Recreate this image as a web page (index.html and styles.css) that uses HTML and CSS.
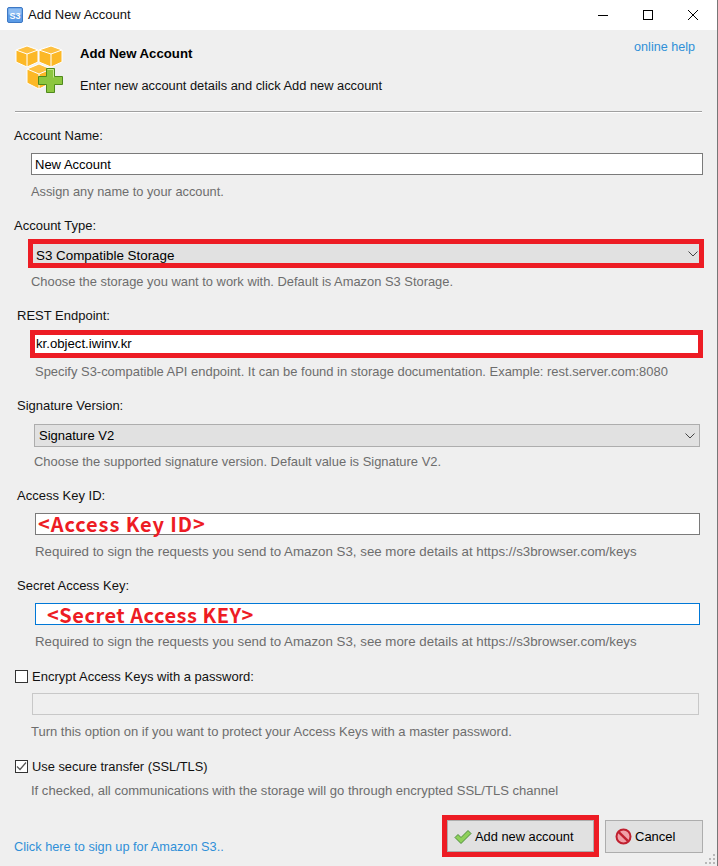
FILE: index.html
```html
<!DOCTYPE html>
<html lang="en">
<head>
	<meta charset="UTF-8">
	<title>Add New Account</title>
	<link rel="stylesheet" href="styles.css">
</head>
<body>
	<div class="window">
		<div class="titlebar">
			<svg class="app-icon" width="16" height="16" viewBox="0 0 16 16">
				<rect x="0.5" y="0.5" width="15" height="15" rx="1.5" fill="#5b9be6" stroke="#3d78c4"/>
				<rect x="1.5" y="1.5" width="13" height="6" fill="#8fbdf2"/>
				<text x="8" y="11.5" text-anchor="middle" class="app-icon-text">S3</text>
			</svg>
			<span class="title">Add New Account</span>
			<div class="win-buttons">
				<svg width="12" height="12" viewBox="0 0 12 12"><path d="M1 6.5h10" stroke="#000" fill="none"/></svg>
				<svg width="12" height="12" viewBox="0 0 12 12"><rect x="1.5" y="1.5" width="9" height="9" stroke="#000" fill="none"/></svg>
				<svg width="12" height="12" viewBox="0 0 12 12"><path d="M1 1l10 10M11 1L1 11" stroke="#000" fill="none"/></svg>
			</div>
		</div>

		<div class="content">
			<div class="header">
				<svg class="logo" width="48" height="48" viewBox="0 0 48 48">
					<g stroke="#fff" stroke-width="1" stroke-linejoin="round">
						<path d="M1 5l11-4 11 4v12l-11 5-11-5z" fill="#fcb826"/>
						<path d="M1 5l11 4 11-4-11-4z" fill="#fdc040"/>
						<path d="M12 9v13" fill="none"/>
						<path d="M24 5l12-4 11 4v12l-11 5-12-5z" fill="#fcb826"/>
						<path d="M24 5l12 4 11-4-11-4z" fill="#fdc040"/>
						<path d="M36 9v13" fill="none"/>
						<path d="M12 24l12-5 12 5v14l-12 6-12-6z" fill="#fcb826"/>
						<path d="M12 24l12 5 12-5-12-5z" fill="#fdc040"/>
						<path d="M24 29v15" fill="none"/>
					</g>
					<path d="M32 24h8v8h8v8h-8v8h-8v-8h-8v-8h8z" transform="translate(-0.5 -0.5)" fill="#8cc63f" stroke="#4f8a1c"/>
					<path d="M33 25h6v8" transform="translate(-0.5 -0.5)" stroke="#c5e58d" fill="none"/>
				</svg>
				<div class="header-text">
					<h1>Add New Account</h1>
					<p>Enter new account details and click Add new account</p>
				</div>
				<a class="link help">online help</a>
			</div>
			<div class="divider"></div>

			<div class="field name">
				<label>Account Name:</label>
				<div class="input">New Account</div>
				<div class="hint">Assign any name to your account.</div>
			</div>

			<div class="field type">
				<label>Account Type:</label>
				<div class="select marked">S3 Compatible Storage
					<svg class="chevron" width="10" height="6" viewBox="0 0 10 6"><path d="M0.5 0.5L5 5l4.5-4.5" stroke="#444" fill="none"/></svg>
				</div>
				<div class="hint">Choose the storage you want to work with. Default is Amazon S3 Storage.</div>
			</div>

			<div class="field endpoint">
				<label>REST Endpoint:</label>
				<div class="input marked">kr.object.iwinv.kr</div>
				<div class="hint">Specify S3-compatible API endpoint. It can be found in storage documentation. Example: rest.server.com:8080</div>
			</div>

			<div class="field signature">
				<label>Signature Version:</label>
				<div class="select">Signature V2
					<svg class="chevron" width="10" height="6" viewBox="0 0 10 6"><path d="M0.5 0.5L5 5l4.5-4.5" stroke="#444" fill="none"/></svg>
				</div>
				<div class="hint">Choose the supported signature version. Default value is Signature V2.</div>
			</div>

			<div class="field access">
				<label>Access Key ID:</label>
				<div class="input scribble">&lt;Access Key ID&gt;</div>
				<div class="hint">Required to sign the requests you send to Amazon S3, see more details at https://s3browser.com/keys</div>
			</div>

			<div class="field secret">
				<label>Secret Access Key:</label>
				<div class="input scribble focused">&lt;Secret Access KEY&gt;</div>
				<div class="hint">Required to sign the requests you send to Amazon S3, see more details at https://s3browser.com/keys</div>
			</div>

			<div class="field encrypt">
				<div class="check"><span class="box"></span>Encrypt Access Keys with a password:</div>
				<div class="input disabled"></div>
				<div class="hint">Turn this option on if you want to protect your Access Keys with a master password.</div>
			</div>

			<div class="field secure">
				<div class="check">
					<span class="box">
						<svg width="11" height="11" viewBox="0 0 11 11"><path d="M1 5.5l3 3 6-7" stroke="#555" stroke-width="1.2" fill="none"/></svg>
					</span>Use secure transfer (SSL/TLS)</div>
				<div class="hint">If checked, all communications with the storage will go through encrypted SSL/TLS channel</div>
			</div>

			<div class="footer">
				<a class="link signup">Click here to sign up for Amazon S3..</a>
				<div class="button-mark">
					<button class="btn add">
						<svg width="18" height="16" viewBox="0 0 18 16"><path d="M1 8.5l3-3 3 3 7-7 3 3-10 10z" fill="#8ed05a" stroke="#4d8f3a"/></svg>
						Add new account
					</button>
				</div>
				<button class="btn cancel">
					<svg width="17" height="17" viewBox="0 0 17 17"><circle cx="8.5" cy="8.5" r="7" fill="#f0a0a8" stroke="#c0202f" stroke-width="2"/><path d="M3.8 4.2l9 8.6" stroke="#c0202f" stroke-width="2.4"/></svg>
					Cancel
				</button>
			</div>
		</div>
		<svg class="grip" width="12" height="12" viewBox="0 0 12 12" fill="#b8b8b8">
			<rect x="9" y="1" width="2" height="2"/><rect x="5" y="5" width="2" height="2"/><rect x="9" y="5" width="2" height="2"/>
			<rect x="1" y="9" width="2" height="2"/><rect x="5" y="9" width="2" height="2"/><rect x="9" y="9" width="2" height="2"/>
		</svg>
	</div>
</body>
</html>
```

FILE: styles.css
```css
html {
	box-sizing: border-box;
}
*, *:before, *:after {
	box-sizing: inherit;
}
body {
	margin: 0;
	font-family: "Liberation Sans", Arial, sans-serif;
	font-size: 13px;
	line-height: 18px;
	color: #111;
}
.window {
	position: relative;
	width: 718px;
	height: 866px;
	overflow: hidden;
	background: #efefef;
	border-right: 1px solid #777;
}

.titlebar {
	display: flex;
	align-items: center;
	height: 30px;
	padding-left: 7px;
	background: #fff;
}
.app-icon-text {
	font-family: "Liberation Sans", sans-serif;
	font-size: 9px;
	font-weight: bold;
	fill: #fff;
}
.title {
	margin-left: 5px;
}
.win-buttons {
	display: flex;
	gap: 33px;
	margin-left: auto;
	margin-right: 18px;
}

.content {
	padding: 0 14px 0 14px;
}
.header {
	display: flex;
	height: 81px;
	padding: 15px 0 0 1px;
}
.header-text {
	margin-left: 17px;
}
.header h1 {
	margin: 0;
	font-size: 13.2px;
	line-height: 18px;
	font-weight: 700;
	color: #000;
}
.header p {
	margin: 14px 0 0;
	font-size: 12.85px;
}
.link {
	color: #2f8fd8;
}
.help {
	margin-left: auto;
	margin-right: 8px;
	margin-top: -7px;
	font-size: 12.6px;
}
.divider {
	width: 687px;
	margin-left: 1px;
	border-top: 1px solid #a0a0a0;
	border-bottom: 1px solid #fff;
	height: 2px;
}

.field {
	margin-top: 15px;
}
.name {
	margin-top: 13px;
}
.field label {
	display: block;
	padding-top: 1px;
}
.input, .select {
	position: relative;
	background: #fff;
	border: 1px solid #7a7a7a;
	height: 22px;
	line-height: 21px;
	padding-left: 3px;
	color: #000;
}
.select {
	background: #e1e1e1;
	border-color: #adadad;
}
.chevron {
	position: absolute;
	right: 4px;
	top: 8px;
}
.marked {
	border: 5px solid #ed1c24;
	line-height: 18px;
	padding-left: 1px;
}
.hint {
	padding-top: 1px;
	color: #6d6d6d;
}

/* each row sits on its own indent, like the original dialog */
.name .input { margin: 8px 0 0 17px; }
.name .hint { margin: 7px 0 0 17px; font-size: 12.8px; }

.type .select { margin: 4px -1px 0 14px; height: 29px; line-height: 23px; padding-left: 3px; font-size: 13.4px; }
.type .chevron { top: 7px; right: 1px; }
.type .hint { margin: 4px 0 0 17px; font-size: 12.9px; }

.endpoint label { margin-left: 3px; }
.endpoint .input { margin: 5px 0 0 16px; height: 28px; font-size: 13.2px; }
.endpoint .hint { margin: 4px 0 0 21px; font-size: 12.95px; }

.signature label { margin-left: 3px; }
.signature .select { margin: 9px 3px 0 20px; height: 23px; padding-left: 4px; }
.signature .hint { margin: 5px 0 0 20px; font-size: 12.95px; }

.access label, .secret label { margin-left: 3px; }
.access .input, .secret .input { margin: 8px 3px 0 21px; }
.access .hint, .secret .hint { margin: 7px 0 0 21px; font-size: 13.3px; }

.scribble {
	font-family: "Noto Sans CJK KR", "DejaVu Sans", sans-serif;
	font-size: 20px;
	font-weight: 700;
	line-height: 20px;
	letter-spacing: 0.9px;
	color: #ed1c24;
	padding-left: 2px;
}
.focused {
	border-color: #0078d7;
	padding-left: 11px;
	line-height: 22px;
	letter-spacing: 0.5px;
}

.encrypt, .secure {
	margin-top: 16px;
}
.check {
	display: flex;
	align-items: flex-start;
	gap: 4px;
	margin-left: 1px;
	padding-top: 1px;
}
.box {
	display: flex;
	align-items: center;
	justify-content: center;
	width: 13px;
	height: 13px;
	margin-top: 2px;
	background: #fff;
	border: 1px solid #333;
}
.disabled {
	margin: 7px 4px 0 18px;
	background: #efefef;
	border-color: #c8c8c8;
}
.encrypt .hint { margin: 7px 0 0 17px; }
.secure .hint { margin: 5px 0 0 17px; font-size: 13.05px; }
.secure .check { font-size: 12.85px; }

.footer {
	display: flex;
	align-items: center;
	margin-top: 15px;
}
.signup {
	margin-top: 22px;
	font-size: 12.75px;
}
.button-mark {
	margin-left: auto;
	border: 5px solid #ed1c24;
}
.btn {
	display: flex;
	align-items: center;
	font: inherit;
	color: #000;
	background: #e1e1e1;
	border: 1px solid #adadad;
	padding: 1px 0 0;
}
.add {
	gap: 3px;
	width: 147px;
	height: 32px;
	padding-left: 6px;
	font-size: 12.85px;
}
.cancel {
	gap: 3px;
	width: 98px;
	height: 33px;
	margin-left: 6px;
	padding-left: 9px;
}
.grip {
	position: absolute;
	right: 1px;
	bottom: 1px;
}
```
